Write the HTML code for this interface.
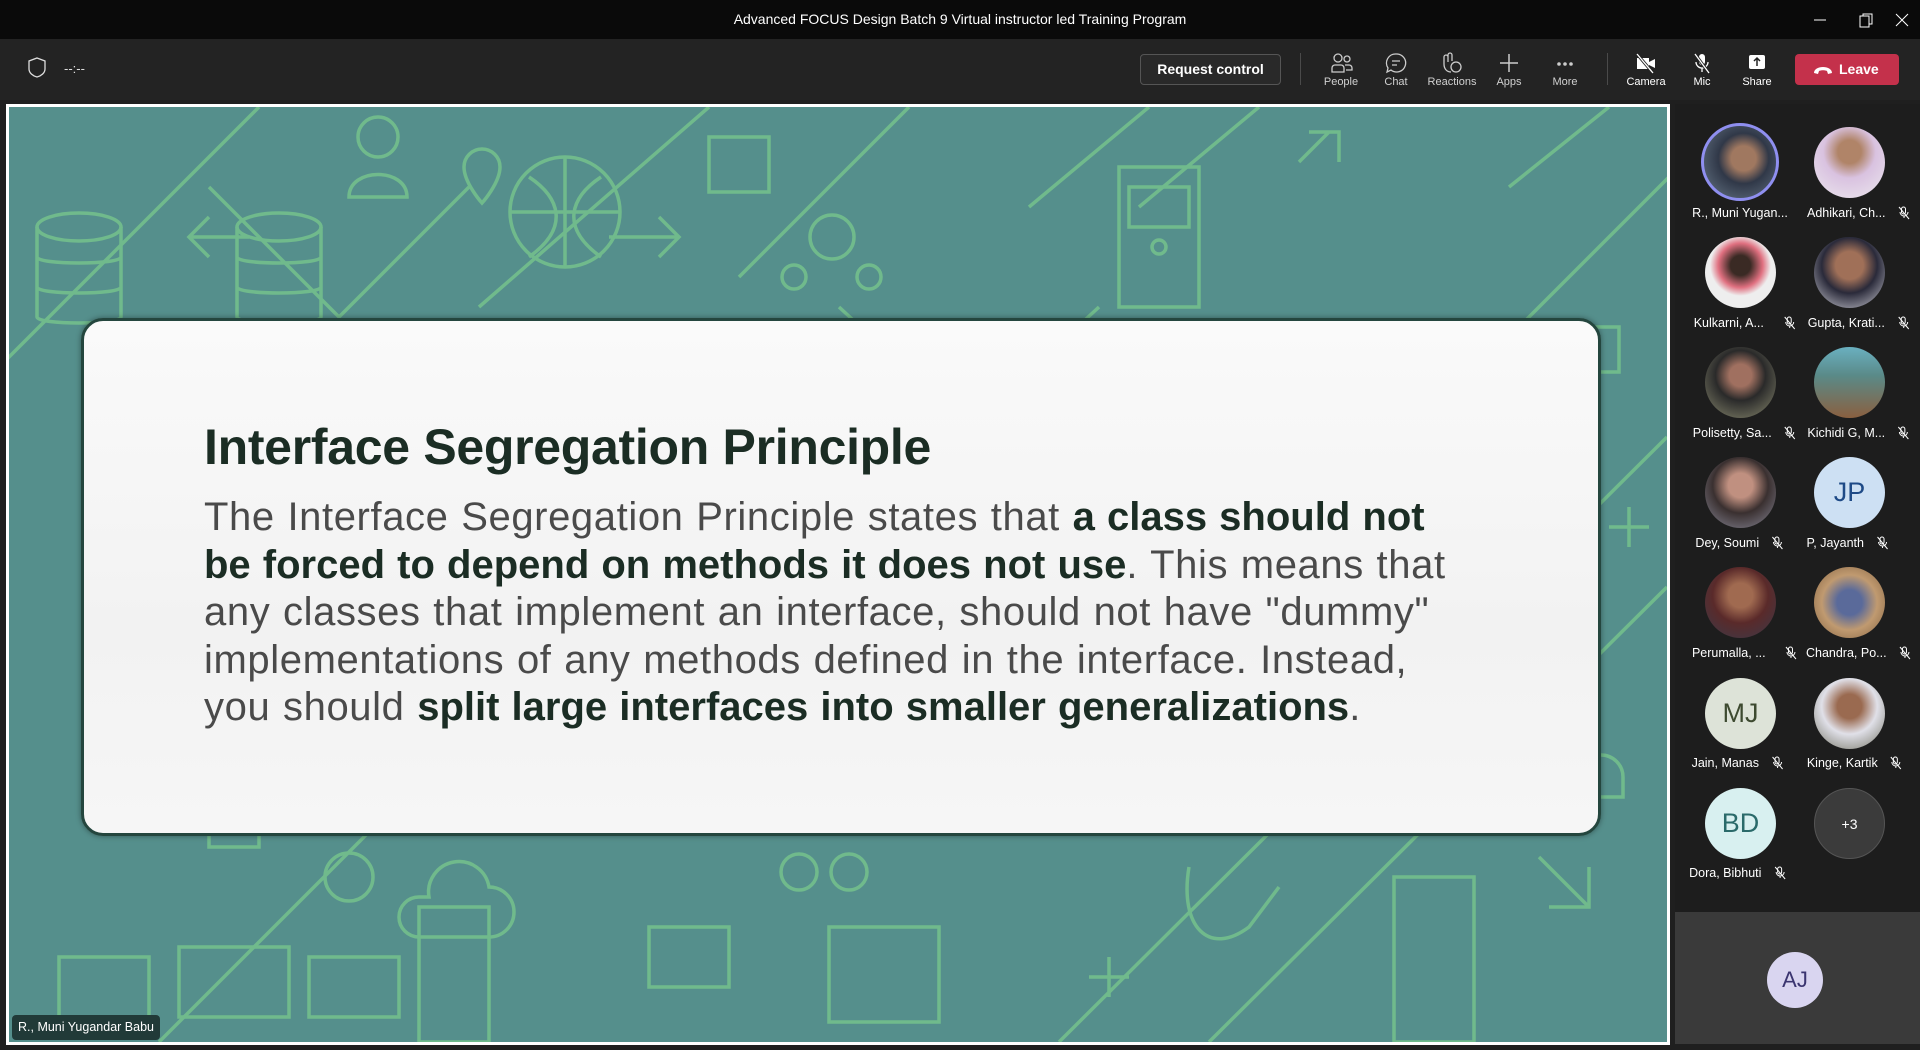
<!DOCTYPE html>
<html><head><meta charset="utf-8"><style>
*{margin:0;padding:0;box-sizing:border-box}
body{width:1920px;height:1050px;background:#1f1f1f;font-family:"Liberation Sans",sans-serif;position:relative;overflow:hidden;color:#fff}
.abs{position:absolute}
#title{left:0;top:0;width:1920px;height:39px;background:#0a0a0a}
#title .t{position:absolute;left:0;width:1920px;top:11px;text-align:center;font-size:14px;color:#fff}
#tool{left:0;top:39px;width:1920px;height:61px;background:#232323}
.ic{position:absolute;top:52px;width:60px;margin-left:-30px;text-align:center}
.ic .lb{position:absolute;top:24px;left:0;width:60px;font-size:11px;color:#d0d0d0;text-align:center}
#stage{left:6px;top:104px;width:1664px;height:941px;border:3px solid #fff;background:#558f8c;overflow:hidden}
#card{left:72px;top:211px;width:1520px;height:518px;border-radius:22px;background:linear-gradient(#fafafa,#f2f2f2 60%,#f6f6f6);border:3px solid #24463e;box-shadow:0 0 6px rgba(0,0,0,.4)}
#card h1{position:absolute;left:120px;top:97px;font-size:50px;font-weight:bold;color:#1b2d24;letter-spacing:-0.3px;white-space:nowrap}
#card .b{position:absolute;left:120px;top:173px;font-size:40px;line-height:47.6px;color:#4a4a4a;white-space:nowrap;letter-spacing:0.6px;word-spacing:1px}
#card .b b{color:#1b2d24;letter-spacing:0}
.p{position:absolute;width:71px;height:71px;border-radius:50%;margin-left:-35px;margin-top:-35px;display:flex;align-items:center;justify-content:center;font-size:28px}
.n{position:absolute;font-size:12.5px;color:#fff;white-space:nowrap;transform:translateX(-50%)}
.n svg{vertical-align:-3px;margin-left:8px}
</style></head><body>
<div id="title" class="abs"><div class="t">Advanced FOCUS Design Batch 9 Virtual instructor led Training Program</div>
<svg class="abs" style="left:1810px;top:12px" width="100" height="16"><line x1="4" y1="8" x2="16" y2="8" stroke="#fff"/><rect x="50" y="4" width="9" height="11" fill="none" stroke="#fff"/><path d="M53 4V2h9v10h-3" fill="none" stroke="#fff"/><path d="M86 2l12 12M98 2L86 14" stroke="#fff"/></svg>
</div>
<div id="tool" class="abs">
<svg class="abs" style="left:27px;top:18px" width="20" height="22"><path d="M10 1l8 3v8c0 4-4 7-8 8-4-1-8-4-8-8V4z" fill="none" stroke="#ddd" stroke-width="1.3"/></svg>
<div class="abs" style="left:64px;top:22px;font-size:13px;color:#ddd">--:--</div>
<div class="abs" style="left:1140px;top:15px;width:141px;height:31px;border:1px solid #555;border-radius:4px;background:#292929;font-size:14px;font-weight:bold;text-align:center;line-height:29px">Request control</div>
<div class="abs" style="left:1300px;top:14px;width:1px;height:32px;background:#4a4a4a"></div>
<div class="abs" style="left:1607px;top:14px;width:1px;height:32px;background:#4a4a4a"></div>
<div class="abs" style="left:1795px;top:15px;width:104px;height:31px;border-radius:4px;background:#c4314b;font-size:14px;font-weight:bold;line-height:31px;padding-left:44px">Leave
<svg class="abs" style="left:18px;top:11px" width="20" height="10"><path d="M1 8c0-8 18-8 18 0l-4 1-1-3c-2-1-6-1-8 0l-1 3z" fill="#fff"/></svg></div>
</div>
<div class="ic" style="left:1341px"><svg width="24" height="22"><circle cx="9" cy="6" r="4" fill="none" stroke="#ccc" stroke-width="1.3"/><circle cx="18" cy="7" r="3" fill="none" stroke="#ccc" stroke-width="1.3"/><path d="M3 20v-4a3 3 0 013-3h6a3 3 0 013 3v4zM16 13h4a3 3 0 013 3v2h-6" fill="none" stroke="#ccc" stroke-width="1.3"/></svg><div class="lb">People</div></div>
<div class="ic" style="left:1396px"><svg width="24" height="22"><path d="M12 2a9 9 0 11-5 16l-4 2 1-4A9 9 0 0112 2z" fill="none" stroke="#ccc" stroke-width="1.3"/><path d="M8 9h8M8 13h5" stroke="#ccc" stroke-width="1.3"/></svg><div class="lb">Chat</div></div>
<div class="ic" style="left:1452px"><svg width="24" height="22"><path d="M4 12V5a2 2 0 014 0v5V3a2 2 0 014 0v6M4 12c0 5 3 8 7 8" fill="none" stroke="#ccc" stroke-width="1.3"/><circle cx="16" cy="15" r="5" fill="none" stroke="#ccc" stroke-width="1.3"/></svg><div class="lb">Reactions</div></div>
<div class="ic" style="left:1509px"><svg width="24" height="22"><path d="M12 2v18M3 11h18" stroke="#ccc" stroke-width="1.5"/></svg><div class="lb">Apps</div></div>
<div class="ic" style="left:1565px"><svg width="24" height="22"><circle cx="6" cy="12" r="1.8" fill="#ccc"/><circle cx="12" cy="12" r="1.8" fill="#ccc"/><circle cx="18" cy="12" r="1.8" fill="#ccc"/></svg><div class="lb">More</div></div>
<div class="ic" style="left:1646px"><svg width="24" height="22"><path d="M3 6h12v11H3zM15 10l6-3v9l-6-3z" fill="#fff"/><path d="M3 2l16 19" stroke="#232323" stroke-width="3"/><path d="M3 2l16 19" stroke="#fff" stroke-width="1.3"/></svg><div class="lb" style="color:#fff">Camera</div></div>
<div class="ic" style="left:1702px"><svg width="24" height="22"><rect x="9" y="2" width="6" height="11" rx="3" fill="#fff"/><path d="M6 10a6 6 0 0012 0M12 16v4" fill="none" stroke="#fff" stroke-width="1.3"/><path d="M5 2l14 19" stroke="#232323" stroke-width="3"/><path d="M5 2l14 19" stroke="#fff" stroke-width="1.3"/></svg><div class="lb" style="color:#fff">Mic</div></div>
<div class="ic" style="left:1757px"><svg width="24" height="22"><rect x="4" y="3" width="16" height="14" rx="2" fill="#fff"/><path d="M12 14V6M9 9l3-3 3 3" stroke="#232323" stroke-width="1.5" fill="none"/></svg><div class="lb" style="color:#fff">Share</div></div>

<div id="stage" class="abs">
<svg class="abs" style="left:0;top:0" width="1658" height="935" fill="none" stroke="#7ccd8c" stroke-width="3.5" opacity=".7">
<path d="M-50 300L250 0M150 935L700 385M1050 935L1658 330M1200 935L1658 480M470 200L700 0M730 170L900 0M1500 80L1600 0M1480 250L1720 10"/>
<path d="M200 80l130 130 130-130M830 200l130 120 130-120M1020 100l120-100M1130 100l120-100"/>
<ellipse cx="70" cy="120" rx="42" ry="14"/><path d="M28 120v90c0 8 84 8 84 0v-90M28 150c0 8 84 8 84 0M28 180c0 8 84 8 84 0"/>
<ellipse cx="270" cy="120" rx="42" ry="14"/><path d="M228 120v90c0 8 84 8 84 0v-90M228 150c0 8 84 8 84 0M228 180c0 8 84 8 84 0"/>
<circle cx="556" cy="105" r="55"/><path d="M501 105h110M556 50v110M520 70c30 20 42 50 0 80M592 70c-30 20-42 50 0 80"/>
<circle cx="369" cy="30" r="20"/><path d="M340 90c0-30 58-30 58 0z"/><path d="M455 60a18 18 0 0136 0c0 16-18 36-18 36s-18-20-18-36z"/>
<path d="M700 30h60v55h-60zM1110 60h80v140h-80zM1120 80h60v40h-60z"/><circle cx="1150" cy="140" r="7"/>
<circle cx="823" cy="130" r="22"/><circle cx="785" cy="170" r="12"/><circle cx="860" cy="170" r="12"/>
<path d="M1440 220h170v45h-170zM1350 265h170v45h-170zM1270 300h170v45h-170zM1200 340h170v95h-170z"/>
<path d="M1290 55l30-30M1300 25l30 0 0 30"/><path d="M650 110l20 20-20 20M600 130h70"/><path d="M200 110l-20 20 20 20 M180 130h60"/>
<path d="M420 790a30 30 0 0160-10 25 25 0 010 50h-70a20 20 0 010-40z"/><circle cx="790" cy="765" r="18"/><circle cx="840" cy="765" r="18"/>
<path d="M200 740h50v-60h-50zM170 840h110v70h-110zM50 850h90v60h-90zM300 850h90v60h-90zM820 820h110v95h-110zM1385 770h80v165h-80zM410 800h70v135h-70zM640 820h80v60h-80z"/>
<circle cx="340" cy="770" r="24"/><path d="M1180 760c-10 60 20 90 60 60l30-40"/><path d="M1100 850v40M1080 870h40M1620 400v40M1600 420h40"/>
<path d="M1570 670a22 22 0 0144 0v20h-44zM1530 750l50 50M1580 760v40h-40"/>
</svg>
<div id="card" class="abs">
<h1>Interface Segregation Principle</h1>
<div class="b">The Interface Segregation Principle states that <b>a class should not</b><br><b>be forced to depend on methods it does not use</b>. This means that<br>any classes that implement an interface, should not have "dummy"<br>implementations of any methods defined in the interface. Instead,<br>you should <b>split large interfaces into smaller generalizations</b>.</div>
</div>
<div class="abs" style="left:3px;top:908px;height:25px;padding:0 6px;background:#213a38;border-radius:4px;font-size:12.5px;line-height:25px;color:#fff">R., Muni Yugandar Babu</div>
</div>

<div class="abs" style="left:1675px;top:104px;width:245px;height:808px;background:#1d1d1d"></div>
<div class="abs" style="left:1675px;top:912px;width:245px;height:132px;background:#3a3a3a"></div>
<div class="p" style="left:1795px;top:980px;width:56px;height:56px;margin:-28px;background:#d9d5f0;color:#3b3570;font-size:22px">AJ</div>

<div class="p" style="left:1740px;top:162px;width:78px;height:78px;margin:-39px;border:3px solid #8f8ff0;background:radial-gradient(circle at 55% 45%,#a07860 0 22%,#303848 45%,#6a7a8a)"></div>
<div class="p" style="left:1849px;top:162px;background:radial-gradient(circle at 50% 35%,#b08468 0 20%,#d9c2e0 45%,#ece8ee)"></div>
<div class="p" style="left:1740px;top:272px;background:radial-gradient(circle at 50% 40%,#3a2a24 0 18%,#e07080 40%,#eeeeee 55%)"></div>
<div class="p" style="left:1849px;top:272px;background:radial-gradient(circle at 50% 40%,#a07058 0 25%,#2a2a3a 50%,#d0d0d8)"></div>
<div class="p" style="left:1740px;top:382px;background:radial-gradient(circle at 50% 40%,#a07060 0 20%,#2a2a2a 45%,#8a8a70)"></div>
<div class="p" style="left:1849px;top:382px;background:linear-gradient(#6ab0c0,#5a8a88 40%,#8a6040)"></div>
<div class="p" style="left:1740px;top:492px;background:radial-gradient(circle at 50% 40%,#c09080 0 22%,#3a3030 50%,#8a8a9a)"></div>
<div class="p" style="left:1849px;top:492px;background:#cde0f3;color:#1e4a86;font-size:27px">JP</div>
<div class="p" style="left:1740px;top:602px;background:radial-gradient(circle at 50% 40%,#a06a50 0 22%,#5a2a2a 50%,#3a3a4a)"></div>
<div class="p" style="left:1849px;top:602px;background:radial-gradient(circle at 50% 50%,#5a6a9a 0 25%,#c09a70 55%,#806040)"></div>
<div class="p" style="left:1740px;top:713px;background:#dde3d8;color:#3d4a30;font-size:27px">MJ</div>
<div class="p" style="left:1849px;top:713px;background:radial-gradient(circle at 50% 40%,#9a6a50 0 22%,#e0e0e8 50%,#707060)"></div>
<div class="p" style="left:1740px;top:823px;background:#d8f0f0;color:#2a6a6a;font-size:27px">BD</div>
<div class="p" style="left:1849px;top:823px;background:#3b3b3b;border:1px solid #555;font-size:14px">+3</div>

<svg width="0" height="0" style="position:absolute"><defs><g id="m"><rect x="4.5" y="1" width="4" height="7" rx="2" fill="none" stroke="#fff"/><path d="M3 6a4 4 0 008 0M7 10v2" fill="none" stroke="#fff"/><path d="M2 1l10 12" stroke="#fff"/></g></defs></svg>
<div class="n" style="left:1740px;top:206px">R., Muni Yugan...</div>
<div class="n" style="left:1859px;top:206px">Adhikari, Ch... <svg width="14" height="14"><use href="#m"/></svg></div>
<div class="n" style="left:1745px;top:316px">Kulkarni, A... &nbsp;&nbsp;<svg width="14" height="14"><use href="#m"/></svg></div>
<div class="n" style="left:1859px;top:316px">Gupta, Krati... <svg width="14" height="14"><use href="#m"/></svg></div>
<div class="n" style="left:1745px;top:426px">Polisetty, Sa... <svg width="14" height="14"><use href="#m"/></svg></div>
<div class="n" style="left:1859px;top:426px">Kichidi G, M... <svg width="14" height="14"><use href="#m"/></svg></div>
<div class="n" style="left:1740px;top:536px">Dey, Soumi <svg width="14" height="14"><use href="#m"/></svg></div>
<div class="n" style="left:1848px;top:536px">P, Jayanth <svg width="14" height="14"><use href="#m"/></svg></div>
<div class="n" style="left:1745px;top:646px">Perumalla, ... &nbsp;&nbsp;<svg width="14" height="14"><use href="#m"/></svg></div>
<div class="n" style="left:1859px;top:646px">Chandra, Po... <svg width="14" height="14"><use href="#m"/></svg></div>
<div class="n" style="left:1738px;top:756px">Jain, Manas <svg width="14" height="14"><use href="#m"/></svg></div>
<div class="n" style="left:1855px;top:756px">Kinge, Kartik <svg width="14" height="14"><use href="#m"/></svg></div>
<div class="n" style="left:1738px;top:866px">Dora, Bibhuti <svg width="14" height="14"><use href="#m"/></svg></div>
</body></html>
